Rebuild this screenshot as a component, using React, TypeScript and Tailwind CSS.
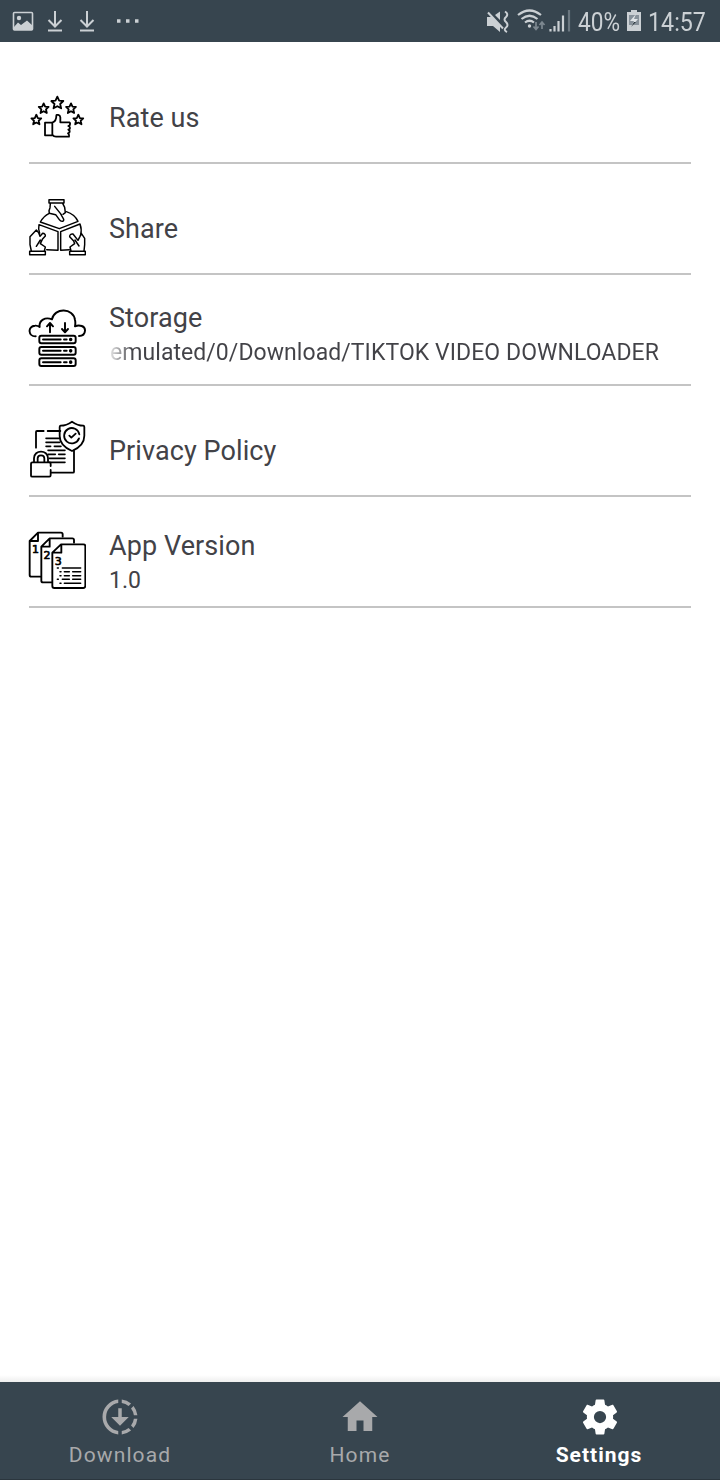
import type { ReactNode } from "react";

function RowIcon({ viewBox, width, children }: { viewBox: string; width: number; children: ReactNode }) {
  return (
    <svg className="size-[58px] shrink-0" viewBox={viewBox} fill="none" stroke="#000" strokeWidth={width} strokeLinecap="round" strokeLinejoin="round">
      {children}
    </svg>
  );
}

const star = "M0 -18L5.5 -6L18 -5L8.5 4L11.5 17L0 10.5L-11.5 17L-8.5 4L-18 -5L-5.5 -6Z";

function RateIcon() {
  return (
    <RowIcon viewBox="24 6 174 174" width={5.4}>
      <path transform="translate(112 53)" d={star} />
      <path transform="translate(71 70) scale(.82)" strokeWidth={6.6} d={star} />
      <path transform="translate(153 70) scale(.82)" strokeWidth={6.6} d={star} />
      <path transform="translate(49 104) scale(.82)" strokeWidth={6.6} d={star} />
      <path transform="translate(175 104) scale(.82)" strokeWidth={6.6} d={star} />
      <path d="M75 113H97V151H75ZM98 112C106 109 109 102 109 92C109 88 120 88 121 97V112H148Q152 114 149 121L145 123Q152 126 149 132L145 134Q151 137 148 143L144 145Q149 149 147 155H108Q101 155 98 150" />
    </RowIcon>
  );
}

function ShareIcon() {
  return (
    <RowIcon viewBox="24 24 174 174" width={4.4}>
      <path d="M87 29H132V39H87ZM91 40L90 53L87 62L88 70L107 74L118 89Q122 95 128 94Q133 91 130 86L122 72M104 49L124 74M128 40L134 52L136 68L129 73" />
      <path d="M88 70Q71 78 61 96L118 116L174 94Q164 73 139 65" />
      <path d="M59 130Q54 118 57 104L114 125V181L80 179M182 136Q186 118 180 102L122 125V181L148 179" />
      <path d="M29 184H76V194H29ZM34 183L30 164V140L49 120L56 128L60 139L68 130Q77 131 76 138L67 148L61 161M49 169L61 150M61 161L76 171L73 183" />
      <path d="M149 184H196V194H149ZM192 183L194 164V145L184 130L180 139L174 151L159 132Q149 131 149 140L161 153L164 161L150 171L153 183M165 150L177 168" />
    </RowIcon>
  );
}

function StorageIcon() {
  return (
    <RowIcon viewBox="24 27 174 174" width={5.8}>
      <path d="M47 109C24 110 22 78 45 77Q52 76 59 81C56 60 76 50 96 58C103 22 160 23 165 60Q167 68 165 79C178 73 196 78 195 92Q194 108 177 108" />
      <path d="M90 97V70M81 79L90 69L99 79M135 69V96M126 87L135 97L144 87" />
      {[107, 141, 175].map((y) => (
        <g key={y}>
          <rect x="58" y={y} width="109" height="23" rx="6" />
          <path d={`M69 ${y + 11.5}H122M132 ${y + 11.5}H140`} />
          <circle cx="152" cy={y + 11.5} r="2.5" fill="#000" />
        </g>
      ))}
    </RowIcon>
  );
}

function PrivacyIcon() {
  return (
    <RowIcon viewBox="24 24 174 174" width={5.4}>
      <path d="M48 107V60Q48 57 51 57H71M83 57H121M162 116V179Q162 182 159 182H92V174M92 162V155Q92 151 89 151H37Q33 151 33 155V191Q33 194 37 194H88Q92 194 92 190V182" />
      <path strokeWidth={4.8} d="M78 79H119M78 91H119M78 103H92M103 103H123M84 115H135M84 127H106M116 127H135M88 139H135M88 151H135" />
      <path d="M42 149V139C42 112 84 112 84 139V149M53 149V139C53 127 73 127 73 139V149" />
      <path d="M156 29C146 36 134 41 122 41Q119 42 119 45V72C119 95 133 107 156 117C179 107 193 94 193 71V45Q193 42 190 41C178 41 166 36 156 29Z" />
      <path d="M177 79A23 23 0 1 1 178 67M148 71L154 77L167 65" />
    </RowIcon>
  );
}

function VersionIcon() {
  return (
    <RowIcon viewBox="24 24 174 174" width={5.6}>
      <path d="M61 161H34Q29 161 29 156V54L54 29H123Q128 29 128 34V41M31 54H54V31" />
      <path d="M95 178H69Q64 178 64 173V71L89 46H157Q162 46 162 51V59M66 71H89V48" />
      <path d="M123 64H190Q196 64 196 70V188Q196 195 190 195H103Q97 195 97 189V89ZM100 89H124V66" />
      <path strokeWidth={4.5} d="M112 135H115M127 135H182M120 146H123M133 146H148M158 146H182M120 158H123M133 158H148M158 158H182M112 169H115M127 169H148M158 169H182M120 181H123M133 181H182" />
      <g fill="#000" stroke="#000" strokeWidth={2} fontFamily="DejaVu Sans, sans-serif" fontSize="33">
        <text x="36" y="91">1</text>
        <text x="70.500" y="108">2</text>
        <text x="104.500" y="125">3</text>
      </g>
    </RowIcon>
  );
}

function Row({ icon, title, textTop, children }: { icon: ReactNode; title: string; textTop: string; children?: ReactNode }) {
  return (
    <li className="flex h-[111px] border-b-2 border-[#c4c4c4]">
      <div className="-ml-px pt-[34px]">{icon}</div>
      <div className={`ml-[23px] flex min-w-0 flex-col ${textTop}`}>
        <span className="text-[27px] leading-[32px] tracking-[0.08px] text-[#424247]">{title}</span>
        {children}
      </div>
    </li>
  );
}

function StatusBar() {
  return (
    <header className="flex h-[42px] items-center bg-[#37454f] text-[#cbd0d4]">
      <svg className="h-[42px] w-[150px]" viewBox="0 0 150 42" fill="none" stroke="currentColor" strokeWidth="2">
        <rect x="13.500" y="12.500" width="19" height="17.500" rx="1" strokeWidth="1.600" />
        <circle cx="19" cy="18" r="2.200" fill="currentColor" stroke="none" />
        <path d="M14 27L18 22.500L21 25L27 20.500L33 26V30H14Z" fill="currentColor" stroke="none" />
        <path d="M55 11V26M48.5 20L55 26.5L61.5 20M48 30.5H62M87 11V26M80.5 20L87 26.5L93.500 20M80 30.500H94" />
        <path d="M117 21H120.500M126 21H129.500M135 21H138.500" strokeWidth="3.6" />
      </svg>
      <svg className="ml-[330px] h-[42px] w-[96px]" viewBox="480 0 96 42" fill="none" stroke="currentColor" strokeWidth="2">
        <path d="M487 17H492L500 25V32L493 26H487ZM495 15L500 11.500V20Z" fill="currentColor" stroke="none" />
        <path d="M488 12.500L503 28.500M505 11.500Q509 14 506 17Q503 19.500 506 22Q509 25 506 27.500Q503 30 507 32" />
        <path d="M518 15Q529.500 6 541 15M521.500 19Q529.500 12.500 537.500 19M525 22.500Q529.500 19 534 22.500" strokeWidth="2.2" />
        <circle cx="529.500" cy="26" r="1.700" fill="currentColor" stroke="none" />
        <path d="M536 22V29M533.500 26.500L536 29.500L538.500 26.500M542 29V22M539.500 25L542 22L544.500 25" stroke="#7d8890" strokeWidth="1.700" />
        <path d="M550.500 31.500V29M554.500 31.500V26M558.500 31.500V21M563 31.500V15.500" strokeWidth="2.200" />
        <path d="M569 31.500V10" stroke="#6b7780" strokeWidth="2.200" />
      </svg>
      <span className="ml-[2px] mt-[2px] w-[42px] whitespace-nowrap text-[26px] leading-[30px]"><span className="inline-block origin-left scale-x-[.87]">40%</span></span>
      <svg className="ml-[6px] h-[42px] w-[16px]" viewBox="626 0 16 42">
        <path d="M631 10H637V12H641V31H627V12H631Z" fill="currentColor" />
        <path d="M629 15H639V25H629Z" fill="#87919a" />
        <path d="M636 14L630 21H634L631 27L638 19H634Z" fill="#e1e5e8" />
        <path d="M634 22L631 27L636 22Z" fill="#28343b" />
      </svg>
      <span className="ml-[6px] mt-[2px] w-[60px] whitespace-nowrap text-[26px] leading-[30px]"><span className="inline-block origin-left scale-x-[.895]">14:57</span></span>
    </header>
  );
}

function Tab({ label, active, children }: { label: string; active?: boolean; children: ReactNode }) {
  return (
    <div className={`flex flex-1 flex-col items-center pt-[14px] ${active ? "text-white" : "text-[#a8a9ab]"}`}>
      <svg className="size-[42px]" viewBox="0 0 24 24" fill="currentColor">{children}</svg>
      <span className={`mt-[4px] text-[21px] leading-[26px] ${active ? "mr-[2px] font-bold tracking-[1px]" : "tracking-[1.1px]"}`}>{label}</span>
    </div>
  );
}

export default function App() {
  return (
    <div className="flex h-[1480px] w-[720px] flex-col overflow-hidden bg-white font-[Roboto,sans-serif]">
      <StatusBar />
      <main className="flex-1 px-[29px] pt-[11px]">
        <ul>
          <Row icon={<RateIcon />} title="Rate us" textTop="pt-[49px]" />
          <Row icon={<ShareIcon />} title="Share" textTop="pt-[49px]" />
          <Row icon={<StorageIcon />} title="Storage" textTop="pt-[27px]">
            <span className="mt-[5px] whitespace-nowrap bg-linear-to-r from-[#424247]/10 to-[#424247] to-[24px] bg-clip-text pl-px text-[23px] leading-[28px] tracking-[0.06px] text-transparent">
              emulated/0/Download/TIKTOK VIDEO DOWNLOADER
            </span>
          </Row>
          <Row icon={<PrivacyIcon />} title="Privacy Policy" textTop="pt-[49px]" />
          <Row icon={<VersionIcon />} title="App Version" textTop="pt-[33px]">
            <span className="mt-[5px] text-[23px] leading-[28px] text-[#424247]">1.0</span>
          </Row>
        </ul>
      </main>
      <div className="h-[7px] bg-linear-to-b from-white to-[#eeeeee]" />
      <nav className="flex h-[98px] border-b border-[#2b363e] bg-[#37454f]">
        <Tab label="Download">
          <path d="M11 2.050A10 10 0 0 0 11 21.950V19.930A8 8 0 0 1 11 4.070ZM13 2.050A10 10 0 0 1 18.320 4.260L16.900 5.690A8 8 0 0 0 13 4.070ZM19.740 5.680A10 10 0 0 1 21.950 11H19.930A8 8 0 0 0 18.310 7.100ZM21.950 13A10 10 0 0 1 19.740 18.320L18.310 16.900A8 8 0 0 0 19.930 13ZM18.320 19.740A10 10 0 0 1 13 21.950V19.930A8 8 0 0 0 16.900 18.310ZM11 7H13V12H17L12 17L7 12H11Z" />
        </Tab>
        <Tab label="Home">
          <path d="M10 20v-6h4v6h5v-8h3L12 3 2 12h3v8z" />
        </Tab>
        <Tab label="Settings" active>
          <path d="M19.430 12.980c.040-.320.070-.640.070-.980s-.030-.660-.070-.980l2.110-1.650c.190-.150.240-.420.120-.640l-2-3.460c-.120-.220-.390-.300-.610-.220l-2.490 1c-.520-.400-1.080-.730-1.690-.980l-.380-2.650A.488.488 0 0 0 14 2h-4c-.250 0-.460.180-.490.420l-.380 2.650c-.610.250-1.170.590-1.690.980l-2.490-1c-.230-.090-.490 0-.610.220l-2 3.460c-.130.220-.070.490.120.640l2.110 1.650c-.040.320-.070.650-.070.980s.030.660.070.980l-2.110 1.650c-.190.150-.240.420-.120.640l2 3.460c.120.220.390.300.610.220l2.490-1c.520.400 1.080.730 1.690.980l.380 2.650c.030.240.240.420.490.420h4c.250 0 .460-.180.490-.420l.380-2.650c.610-.250 1.170-.590 1.690-.980l2.490 1c.230.090.490 0 .610-.220l2-3.460c.120-.220.070-.490-.120-.640zM12 15.500A3.500 3.500 0 1 1 12 8.500A3.500 3.500 0 0 1 12 15.500z" />
        </Tab>
      </nav>
    </div>
  );
}
